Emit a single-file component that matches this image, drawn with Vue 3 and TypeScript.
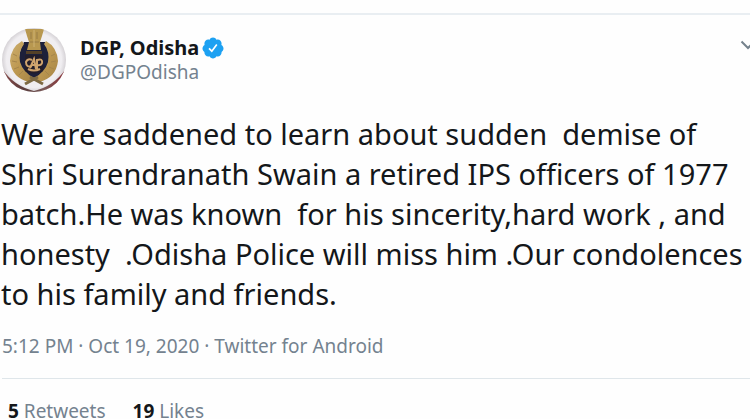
<script setup lang="ts">
interface Stat {
  label: string
  count: number
}

const author = { name: 'DGP, Odisha', handle: '@DGPOdisha' }

const lines: string[] = [
  'We are saddened to learn about sudden  demise of',
  'Shri Surendranath Swain a retired IPS officers of 1977',
  'batch.He was known  for his sincerity,hard work , and',
  'honesty  .Odisha Police will miss him .Our condolences',
  'to his family and friends.',
]
const message = lines.join('\n')

const stats: Stat[] = [
  { label: 'Retweets', count: 5 },
  { label: 'Likes', count: 19 },
]
</script>

<template>
  <article class="tweet">
    <header class="head">
      <svg class="avatar" viewBox="0 0 66 66" role="img" aria-label="Odisha Police emblem">
        <defs>
          <clipPath id="disc"><circle cx="33" cy="33" r="32" /></clipPath>
          <radialGradient id="plate" cx="0.5" cy="0.5" r="0.52">
            <stop offset="0.8" stop-color="#f0eef1" />
            <stop offset="1" stop-color="#c8c4c8" />
          </radialGradient>
          <linearGradient id="gold" x1="0" y1="0" x2="1" y2="1">
            <stop offset="0" stop-color="#cdb070" />
            <stop offset="0.5" stop-color="#bd9850" />
            <stop offset="1" stop-color="#a58446" />
          </linearGradient>
          <linearGradient id="rim" x1="0" y1="0" x2="1" y2="0">
            <stop offset="0" stop-color="#8a4a48" />
            <stop offset="0.35" stop-color="#5a3c3c" />
            <stop offset="0.65" stop-color="#7a5a58" />
            <stop offset="1" stop-color="#8c2a30" />
          </linearGradient>
        </defs>
        <g clip-path="url(#disc)">
          <rect width="66" height="66" fill="url(#plate)" />
          <path d="M0 40 Q12 59 33 64 Q54 59 66 40 V66 H0Z" fill="url(#rim)" />
          <path d="M23 15 H44 Q50 26 49 37 Q47 48 33 51 Q20 48 18 37 Q17 26 23 15Z" fill="#1d203a" />
          <path d="M21 14 Q10 20 9 34 Q11 51 28 55 L33 51 Q22 45 19 35 Q17 25 23 17Z" fill="url(#gold)" />
          <path d="M45 14 Q56 20 57 34 Q55 51 38 55 L33 51 Q44 45 47 35 Q49 25 43 17Z" fill="url(#gold)" />
          <path
            d="M12 27l4 2M11 34l5 1M13 42l5-2M18 48l4-4M54 27l-4 2M55 34l-5 1M53 42l-5-2M48 48l-4-4"
            stroke="#a5854b"
            stroke-width="1"
            fill="none"
          />
          <path d="M24 2 H43 L41 9 L39 15 L40 23 H26 L28 15 L26 9Z" fill="#b89850" />
          <path d="M30 5v7M36 5v7M29 15h9" stroke="#987c46" stroke-width="1" fill="none" />
          <path d="M33 3v17" stroke="#cfb374" stroke-width="1" fill="none" />
          <path d="M25 24 H41 V27 H25Z" fill="#554127" />
          <path d="M24 28 H42 L42 44 Q33 49 24 44Z" fill="#231d29" />
          <g fill="none" stroke="#d0a46e" stroke-width="2">
            <path d="M31 33 Q27 31 25 35 Q25 41 31 39" />
            <path d="M29 41 L33 32 L35 42 M30 38h6" />
            <path d="M36 42 V33 Q42 31 41 36 Q40 39 36 38" />
            <path d="M27 42q6 3 12 0" />
          </g>
          <path d="M24 57 L37 50 M42 57 L29 50" stroke="#7d6a44" stroke-width="3" />
        </g>
      </svg>

      <div class="identity">
        <div class="name-row">
          <strong class="name">{{ author.name }}</strong>
          <svg class="badge" viewBox="0 0 24 24" role="img" aria-label="Verified account">
            <path
              fill="#1da1f2"
              d="M22.5 12.5c0-1.58-.875-2.95-2.148-3.6.154-.435.238-.905.238-1.4 0-2.21-1.71-3.998-3.818-3.998-.47 0-.92.084-1.336.25C14.818 2.415 13.51 1.5 12 1.5s-2.816.917-3.437 2.25c-.415-.165-.866-.25-1.336-.25-2.11 0-3.818 1.79-3.818 4 0 .494.083.964.237 1.4-1.272.65-2.147 2.018-2.147 3.6 0 1.495.782 2.798 1.942 3.486-.02.17-.032.34-.032.514 0 2.21 1.708 4 3.818 4 .47 0 .92-.086 1.335-.25.62 1.334 1.926 2.25 3.437 2.25s2.818-.916 3.437-2.25c.415.163.865.248 1.336.248 2.11 0 3.818-1.79 3.818-4 0-.174-.012-.344-.033-.513 1.158-.687 1.943-1.99 1.943-3.484z"
            />
            <path d="M8 12.4l2.8 2.8 5-6.6" fill="none" stroke="#fff" stroke-width="1.7" />
          </svg>
        </div>
        <a class="handle" href="#profile">{{ author.handle }}</a>
      </div>

      <button class="more" type="button" aria-label="More options">
        <svg viewBox="0 0 16 10" aria-hidden="true">
          <path d="M1.5 1.5L8 8l6.5-6.5" fill="none" stroke="#75828c" stroke-width="2" />
        </svg>
      </button>
    </header>

    <p class="message">{{ message }}</p>

    <p class="meta">
      <time datetime="2020-10-19T17:12">5:12 PM · Oct 19, 2020</time> ·
      <a href="#source">Twitter for Android</a>
    </p>

    <footer class="stats">
      <a v-for="stat in stats" :key="stat.label" class="stat" href="#stats">
        <strong>{{ stat.count }}</strong> {{ stat.label }}
      </a>
    </footer>
  </article>
</template>

<style>
body {
  background: #fefefe;
  overflow: hidden;
}
</style>

<style scoped>
.tweet {
  margin-top: 13px;
  border-top: 2px solid #e9eef2;
  color: #14171a;
  font-family: 'Noto Sans', 'Open Sans', sans-serif;
  overflow: hidden;
}

.head {
  display: flex;
  align-items: flex-start;
  padding: 12px 0 0 1px;
}

.avatar {
  flex: none;
  width: 66px;
  height: 66px;
}

.identity {
  flex: 1;
  padding: 8px 0 0 13px;
}

.name-row {
  display: flex;
  align-items: center;
  gap: 2px;
}

.name {
  font-size: 20px;
  line-height: 25px;
}

.badge {
  width: 24px;
  height: 24px;
}

a {
  color: inherit;
  text-decoration: none;
}

.handle {
  display: block;
  color: #74828f;
  font-size: 19px;
  line-height: 25px;
}

.more {
  flex: none;
  margin: 13px -6px 0 0;
  padding: 0;
  border: 0;
  background: none;
  cursor: pointer;
}

.more svg {
  display: block;
  width: 16px;
  height: 10px;
}

.message {
  margin: 21px 0 0;
  padding-left: 1px;
  font-size: 29px;
  line-height: 40px;
  white-space: pre;
}

.meta {
  margin: 19px 0 0;
  padding: 0 2px;
  color: #74828f;
  font-size: 19px;
  line-height: 26px;
}

.stats {
  display: flex;
  gap: 27px;
  margin: 19px 0 0 2px;
  padding: 19px 0 0 6px;
  border-top: 1px solid #dfe6ea;
  color: #74828f;
  font-size: 19px;
  line-height: 26px;
}

.stat strong {
  color: #14171a;
}
</style>
